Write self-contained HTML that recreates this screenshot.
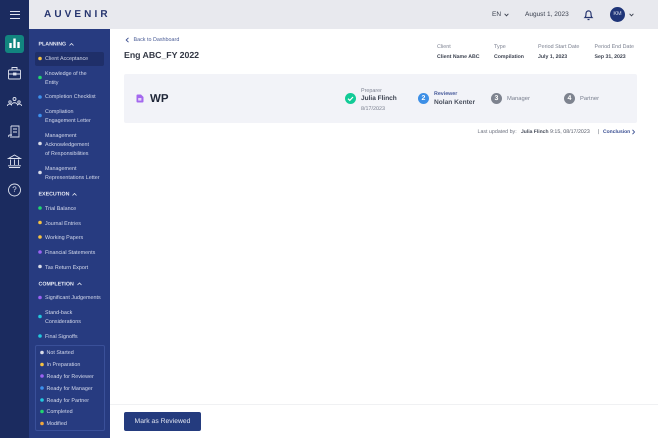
<!DOCTYPE html>
<html><head><meta charset="utf-8">
<style>
*{box-sizing:border-box}
html,body{margin:0;padding:0}
body{width:658px;height:438px;overflow:hidden;background:#fff;position:relative;font-family:"Liberation Sans",sans-serif;color:#2a3040;text-rendering:geometricPrecision}
#w{position:absolute;left:0;top:0;width:658px;height:438px;filter:blur(.3px)}
.a{position:absolute;white-space:nowrap;line-height:1}
#rail{position:absolute;left:0;top:0;width:29px;height:438px;background:#1b2b5f}
#side{position:absolute;left:29px;top:29px;width:81px;height:409px;background:#273b80}
#top{position:absolute;left:29px;top:0;width:629px;height:29px;background:#e8e9ee}
.h{font-size:5.3px;font-weight:bold;color:#e6e9f4;left:38.5px;transform:translateY(1.5px)}
.i{font-size:5.4px;color:#d5daec;left:45px;line-height:9.3px;white-space:nowrap;position:absolute;transform:translateY(1px)}
.l{font-size:5.4px;color:#7b8090;transform:translateY(1px)}
.v{font-size:5.2px;font-weight:bold;color:#3c4250;transform:translateY(1px)}
.n{position:absolute;width:11px;height:11px;border-radius:50%;color:#fff;font-size:7px;font-weight:bold;text-align:center;line-height:11px}
</style></head><body><div id="w">
<div id="rail"></div><div id="side"></div><div id="top"></div>

<!-- hamburger -->
<div class="a" style="left:10px;top:10.500px;width:9.500px;height:1.200px;background:#dfe3ef"></div>
<div class="a" style="left:10px;top:14px;width:9.500px;height:1.200px;background:#dfe3ef"></div>
<div class="a" style="left:10px;top:17.500px;width:9.500px;height:1.200px;background:#dfe3ef"></div>
<div class="a" style="left:44px;top:9.500px;font-size:10px;font-weight:bold;letter-spacing:3.100px;color:#26356f">AUVENIR</div>

<!-- rail icons -->
<div class="a" style="left:5px;top:35px;width:19px;height:18px;border-radius:3px;background:#12857f"></div>
<svg class="a" style="left:0;top:0" width="29" height="200" viewBox="0 0 29 200" fill="none" stroke="#dfe3ef" stroke-width=".9">
<path d="M10.500 48V43M14.500 48V38.500M18.500 48V42" stroke="#fff" stroke-width="2.400"/>
<rect x="8.500" y="70" width="12" height="9" rx="1"/><path d="M12 70v-2.500h5v2.500M8.500 74h12"/><rect x="13.500" y="73" width="2.500" height="2" fill="#dfe3ef"/>
<circle cx="14.500" cy="99" r="1.500"/><circle cx="10" cy="102" r="1.200"/><circle cx="19" cy="102" r="1.200"/><path d="M11.500 105c0-3 6-3 6 0M7.500 106c0-2.500 4-2.500 4-.5M17.500 105.500c0-2 4-2 4 .5"/>
<path d="M11 126h8v11H10M11 126v10M13 129h4M13 132h4M9 137c-1-1.500 0-2 1-2h2"/>
<path d="M8.500 158.500L14.500 155l6 3.500zM9 167.500h11M8 165.800h13M10.500 159.500v5.500M14.500 159.500v5.500M18.500 159.500v5.500"/>
<circle cx="14.500" cy="190" r="6"/>
</svg>
<div class="a" style="left:12px;top:186px;width:5px;text-align:center;font-size:8px;color:#dfe3ef">?</div>

<!-- sidebar -->
<div class="a" style="left:35px;top:52px;width:69px;height:14px;background:#1f2f69;border-radius:2px"></div>
<div class="a h" style="top:41px">PLANNING</div>
<div class="a h" style="top:191px">EXECUTION</div>
<div class="a h" style="top:280.500px">COMPLETION</div>
<svg class="a" style="left:0;top:0" width="110" height="438" fill="none">
<g stroke="#dfe3ef" stroke-width=".8"><path d="M69.500 45.500L71.500 43.500 73.500 45.500M72.500 195.500L74.500 193.500 76.500 195.500M77.500 285L79.500 283 81.500 285"/></g>
<g fill="#f5c242"><circle cx="40" cy="58.500" r="1.800"/><circle cx="40" cy="222.500" r="1.800"/><circle cx="40" cy="237" r="1.800"/><circle cx="42" cy="364.500" r="1.800"/></g>
<g fill="#21d66e"><circle cx="40" cy="77.500" r="1.800"/><circle cx="40" cy="208" r="1.800"/><circle cx="42" cy="411.500" r="1.800"/></g>
<g fill="#3d90ee"><circle cx="40" cy="97" r="1.800"/><circle cx="40" cy="115.500" r="1.800"/><circle cx="42" cy="388" r="1.800"/></g>
<g fill="#d9dce8"><circle cx="40" cy="143.500" r="1.800"/><circle cx="40" cy="172.500" r="1.800"/><circle cx="40" cy="266.500" r="1.800"/><circle cx="42" cy="352.500" r="1.800"/></g>
<g fill="#9a62f2"><circle cx="40" cy="252" r="1.800"/><circle cx="40" cy="297.500" r="1.800"/><circle cx="42" cy="376" r="1.800"/></g>
<g fill="#22c8de"><circle cx="40" cy="316.500" r="1.800"/><circle cx="40" cy="336" r="1.800"/><circle cx="42" cy="400" r="1.800"/></g>
<circle cx="42" cy="423.500" r="1.800" fill="#f0a63c"/>
</svg>

<div class="i" style="top:54px">Client Acceptance</div>
<div class="i" style="top:69px">Knowledge of the<br>Entity</div>
<div class="i" style="top:92px">Completion Checklist</div>
<div class="i" style="top:107px">Compliation<br>Engagement Letter</div>
<div class="i" style="top:130.500px">Management<br>Acknowledgement<br>of Responsibilities</div>
<div class="i" style="top:164px">Management<br>Representations Letter</div>

<div class="i" style="top:204px">Trial Balance</div>
<div class="i" style="top:218.500px">Journal Entries</div>
<div class="i" style="top:233px">Working Papers</div>
<div class="i" style="top:248px">Financial Statements</div>
<div class="i" style="top:262.500px">Tax Return Export</div>

<div class="i" style="top:293px">Significant Judgements</div>
<div class="i" style="top:308px">Stand-back<br>Considerations</div>
<div class="i" style="top:331.500px">Final Signoffs</div>

<div class="a" style="left:34.500px;top:345px;width:70px;height:86px;border:1px solid #3a5099;border-radius:2px"></div>
<div class="i" style="left:46.500px;top:348px">Not Started</div>
<div class="i" style="left:46.500px;top:360px">In Preparation</div>
<div class="i" style="left:46.500px;top:371.500px">Ready for Reviewer</div>
<div class="i" style="left:46.500px;top:383.500px">Ready for Manager</div>
<div class="i" style="left:46.500px;top:395.500px">Ready for Partner</div>
<div class="i" style="left:46.500px;top:407px">Completed</div>
<div class="i" style="left:46.500px;top:419px">Modified</div>

<!-- header right -->
<div class="a" style="left:492px;top:11.500px;font-size:6.500px;color:#3c4250">EN</div>
<svg class="a" style="left:504px;top:13px" width="5" height="4" fill="none" stroke="#3c4250" stroke-width=".9"><path d="M.6 .8L2.500 2.800 4.400 .8"/></svg>
<div class="a" style="left:525px;top:11.500px;font-size:6.500px;color:#3c4250">August 1, 2023</div>
<svg class="a" style="left:583px;top:9px" width="11" height="12" fill="none" stroke="#26356f" stroke-width="1.200"><path d="M2 8.500c1-1 1-2 1-4 0-3.500 5-3.500 5 0 0 2 0 3 1 4zM4.500 10.500h2"/></svg>
<div class="a" style="left:610px;top:7px;width:15px;height:15px;border-radius:50%;background:#1f3578;color:#dfe3ef;font-size:5.500px;text-align:center;line-height:15px">KM</div>
<svg class="a" style="left:628.500px;top:13px" width="5" height="4" fill="none" stroke="#3c4250" stroke-width=".9"><path d="M.6 .8L2.500 2.800 4.400 .8"/></svg>

<!-- title -->
<svg class="a" style="left:124.500px;top:37px" width="5" height="6" fill="none" stroke="#3c4f90" stroke-width=".9"><path d="M3.500 .8L1.200 3 3.500 5.200"/></svg>
<div class="a" style="left:133.500px;top:37.500px;font-size:5.400px;color:#4a5c96">Back to Dashboard</div>
<div class="a" style="left:124px;top:50.500px;font-size:8.800px;font-weight:bold;color:#333845;letter-spacing:-.05px">Eng ABC_FY 2022</div>

<div class="a l" style="left:437px;top:44px">Client</div>
<div class="a v" style="left:437px;top:53.500px">Client Name ABC</div>
<div class="a l" style="left:494px;top:44px">Type</div>
<div class="a v" style="left:494px;top:53.500px">Compilation</div>
<div class="a l" style="left:538px;top:44px">Period Start Date</div>
<div class="a v" style="left:538px;top:53.500px">July 1, 2023</div>
<div class="a l" style="left:594.500px;top:44px">Period End Date</div>
<div class="a v" style="left:594.500px;top:53.500px">Sep 31, 2023</div>

<!-- WP card -->
<div class="a" style="left:124px;top:74px;width:513px;height:49px;background:#f2f3f8;border-radius:2px"></div>
<svg class="a" style="left:136px;top:94px" width="8" height="9"><path d="M.5 1.500Q.5 .5 1.500 .5H5L7.500 3V7.500Q7.500 8.500 6.500 8.500H1.500Q.5 8.500 .5 7.500Z" fill="#a468ee"/><rect x="2.200" y="4" width="3.200" height="2.600" fill="#e5d5fa"/></svg>
<div class="a" style="left:150px;top:93.500px;font-size:11.500px;font-weight:bold;color:#1f2638">WP</div>

<div class="n" style="left:345px;top:93px;background:#12cb97"></div>
<svg class="a" style="left:345px;top:93px" width="11" height="11" fill="none" stroke="#fff" stroke-width="1.200"><path d="M3 5.700L4.800 7.400 8 4"/></svg>
<div class="a l" style="left:361px;top:87.500px">Preparer</div>
<div class="a" style="left:361px;top:96px;font-size:6.500px;font-weight:bold;color:#3c4250">Julia Flinch</div>
<div class="a l" style="left:361px;top:105.500px">8/17/2023</div>

<div class="n" style="left:418px;top:93px;background:#3d8fe6">2</div>
<div class="a" style="left:434px;top:92px;font-size:5.300px;font-weight:bold;color:#46599a">Reviewer</div>
<div class="a" style="left:434px;top:100px;font-size:6.600px;font-weight:bold;color:#4a505e">Nolan Kenter</div>

<div class="n" style="left:491px;top:93px;background:#7e838f">3</div>
<div class="a l" style="left:507px;top:96px;font-size:5.800px">Manager</div>
<div class="n" style="left:564px;top:93px;background:#7e838f">4</div>
<div class="a l" style="left:580px;top:96px;font-size:5.800px">Partner</div>

<!-- last updated -->
<div class="a" style="left:477.500px;top:129.500px;font-size:5.300px;color:#6e7380">Last updated by:</div>
<div class="a" style="left:521px;top:129.500px;font-size:5px;font-weight:bold;color:#444a58">Julia Flinch</div>
<div class="a" style="left:550px;top:129.500px;font-size:5.300px;color:#5a5f6c">9:15, 08/17/2023</div>
<div class="a" style="left:598px;top:129.500px;font-size:5.300px;color:#5a5f6c">|</div>
<div class="a" style="left:603px;top:129.500px;font-size:5px;font-weight:bold;color:#3a4f92">Conclusion</div>
<svg class="a" style="left:631px;top:129px" width="5" height="6" fill="none" stroke="#3a4f92" stroke-width=".9"><path d="M1.500 .8L3.500 3 1.500 5.200"/></svg>

<!-- footer -->
<div class="a" style="left:110px;top:404px;width:548px;height:1px;background:#f0f1f3"></div>
<div class="a" style="left:124px;top:412px;width:77px;height:19px;background:#243b7e;border-radius:2px;color:#dfe3ef;font-size:6.800px;text-align:center;line-height:19.500px">Mark as Reviewed</div>
</div></body></html>
